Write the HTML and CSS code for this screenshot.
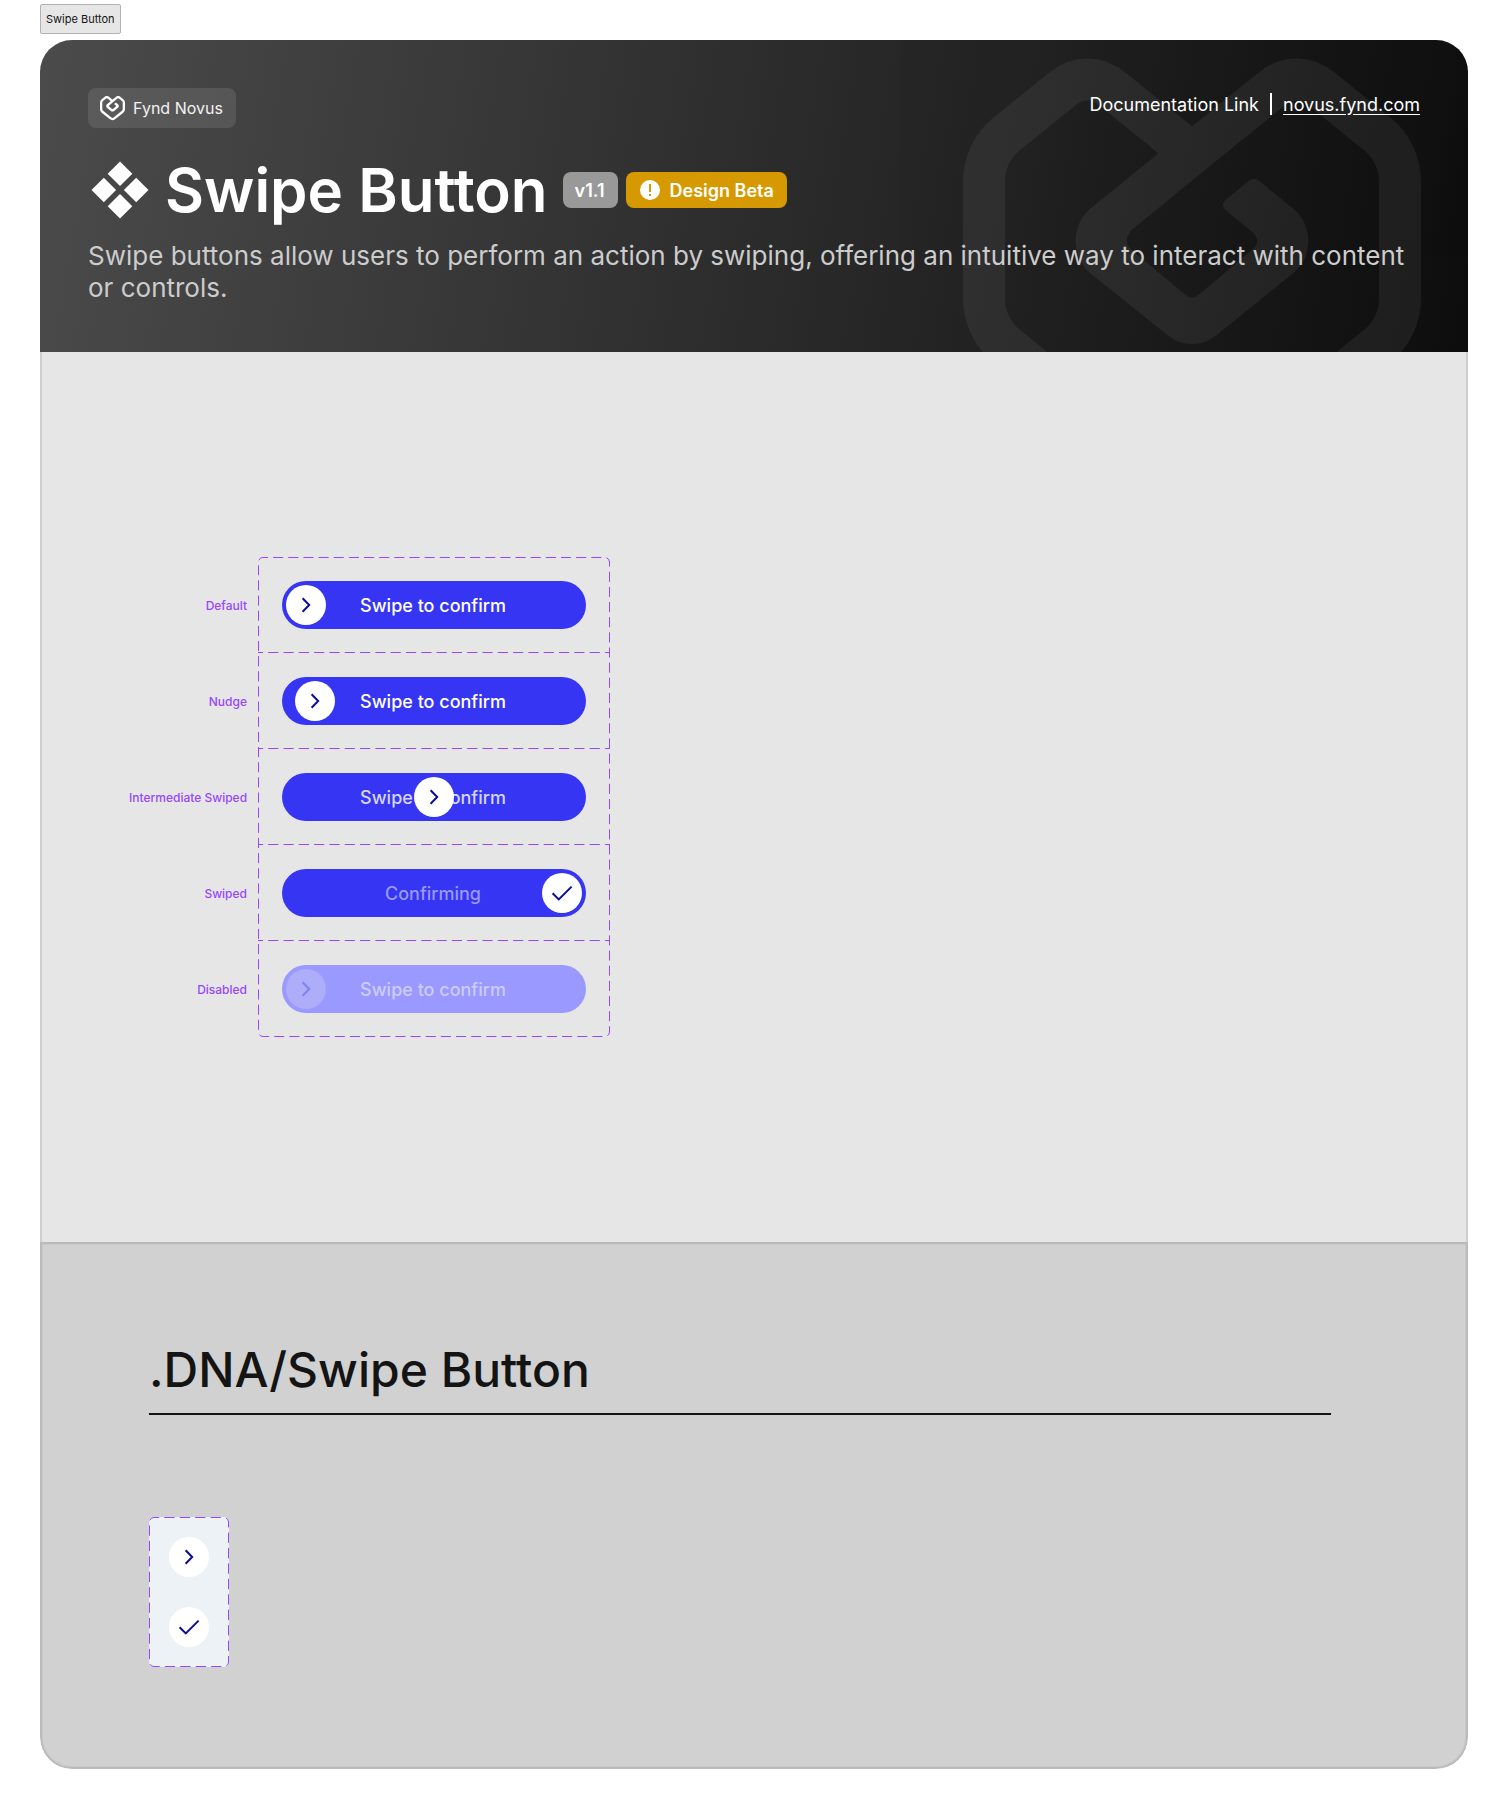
FILE: index.html
```html
<!DOCTYPE html>
<html lang="en">
<head>
<meta charset="utf-8">
<meta name="viewport" content="width=device-width, initial-scale=1">
<title>Swipe Button</title>
<link rel="stylesheet" href="styles.css">
</head>
<body>
<svg width="0" height="0" class="sprite" aria-hidden="true">
  <symbol id="logo" viewBox="0 0 458 458">
    <path fill="none" stroke="currentColor" stroke-width="42" d="M229 95.4 L150 31.500 C134.500 18.500 115.500 18 100 30.500 L44 75.600 C30 87 21 104 21 124 V240 C21 260 30 277 44 288.400 L190 407 C213 425.800 245 425.800 268 407 L414 288.400 C428 277 437 260 437 240 V124 C437 104 428 87 414 75.600 L358 30.500 C342.500 18 323.500 18.500 308 31.500 L229 95.4"/>
    <path fill="currentColor" d="M229 68.300 L127 151 C108 167 108 199 127 215 L205 277.600 C219 289 239 289 253 277.600 L331 214.500 C350 199 350 167 331 151.500 L296 122.800 Q291 118.800 286 122.800 L262.500 142 Q257.500 147 262.500 152 L289.500 174 Q299 183 289.500 191.500 L236 236.500 Q229 243 222 236.500 L168.500 192 Q159 183 168.500 172 L242.300 111.700 Z"/>
  </symbol>
  <symbol id="chevron" viewBox="0 0 24 24">
    <path fill="none" stroke="currentColor" stroke-width="2" d="M8.6 5.2 L15.2 12 L8.6 18.8"/>
  </symbol>
  <symbol id="check" viewBox="0 0 24 24">
    <path fill="none" stroke="currentColor" stroke-width="2" d="M2.6 12.2 L8.8 18.4 L21.6 5.6"/>
  </symbol>
</svg>

<div class="tag">Swipe Button</div>

<main class="sheet">
  <header class="hero">
    <svg class="watermark" aria-hidden="true"><use href="#logo"/></svg>
    <div class="topbar">
      <div class="brand"><svg aria-hidden="true"><use href="#logo"/></svg>Fynd Novus</div>
      <div class="links"><span>Documentation Link</span><span class="bar"></span><a href="#docs">novus.fynd.com</a></div>
    </div>
    <div class="heading">
      <svg class="mark" viewBox="0 0 64 64" aria-hidden="true"><path fill="currentColor" d="M32 3.500l12.300 12.300-12.300 12.300-12.300-12.300zM32 35.900l12.300 12.300-12.300 12.300-12.300-12.300zM15.800 19.700l12.300 12.300-12.300 12.300-12.300-12.300zM48.200 19.700l12.300 12.300-12.300 12.300-12.300-12.300z"/></svg>
      <h1>Swipe Button</h1>
      <div class="badges">
        <span class="badge">v1.1</span>
        <span class="badge beta"><svg viewBox="0 0 20 20" aria-hidden="true"><circle cx="10" cy="10" r="10" fill="#fff"/><path stroke="#d69900" stroke-width="2" d="M10 4v8M10 14v2"/></svg>Design Beta</span>
      </div>
    </div>
    <p>Swipe buttons allow users to perform an action by swiping, offering an intuitive way to interact with content or controls.</p>
  </header>

  <section class="states">
    <div class="grid">
      <svg class="frame" aria-hidden="true">
        <rect x="0.5" y="0.5" width="351" height="479" rx="4.500" pathLength="1635"/>
        <path d="M0 95.500H352M0 191.500H352M0 287.500H352M0 383.500H352" pathLength="1380"/>
      </svg>
      <span class="label">Default</span>
      <div class="cell"><button class="swipe"><span class="thumb"><svg><use href="#chevron"/></svg></span>Swipe to confirm</button></div>
      <span class="label">Nudge</span>
      <div class="cell"><button class="swipe nudge"><span class="thumb"><svg><use href="#chevron"/></svg></span>Swipe to confirm</button></div>
      <span class="label">Intermediate Swiped</span>
      <div class="cell"><button class="swipe midway"><span class="thumb"><svg><use href="#chevron"/></svg></span>Swipe to confirm</button></div>
      <span class="label">Swiped</span>
      <div class="cell"><button class="swipe done"><span class="thumb"><svg><use href="#check"/></svg></span>Confirming</button></div>
      <span class="label">Disabled</span>
      <div class="cell"><button class="swipe" disabled><span class="thumb"><svg><use href="#chevron"/></svg></span>Swipe to confirm</button></div>
    </div>
  </section>

  <section class="dna">
    <h2>.DNA/Swipe Button</h2>
    <div class="parts">
      <svg class="frame" aria-hidden="true"><rect x="0.5" y="0.5" width="79" height="149" rx="4.500" pathLength="435"/></svg>
      <span class="knob"><svg><use href="#chevron"/></svg></span>
      <span class="knob"><svg><use href="#check"/></svg></span>
    </div>
  </section>
</main>
</body>
</html>
```
FILE: styles.css
```css
* { box-sizing: border-box; }

body {
  margin: 0;
  padding: 4px 40px 40px;
  background: #fff;
  color: #141414;
  font-family: Inter, "Liberation Sans", sans-serif;
}

svg { display: block; flex: none; }
.sprite { position: absolute; }

.tag {
  width: max-content;
  height: 30px;
  padding: 0 5px;
  border: 1px solid #b2b2b2;
  border-radius: 2px;
  background: #e6e6e6;
  font-size: 11px;
  line-height: 28px;
}

.sheet {
  margin-top: 6px;
  border-radius: 32px;
  overflow: hidden;
}

.hero {
  position: relative;
  overflow: hidden;
  padding: 48px;
  background: linear-gradient(100deg, #4b4b4b, #0d0d0d);
  color: #fff;
}

.watermark {
  position: absolute;
  top: 18px;
  right: 47px;
  width: 458px;
  height: 458px;
  opacity: 0.06;
}

.topbar, .heading, .hero p { position: relative; }

.topbar {
  display: flex;
  justify-content: space-between;
  align-items: flex-start;
}

.brand {
  display: flex;
  align-items: center;
  gap: 8px;
  height: 40px;
  padding: 0 13px 0 12px;
  border-radius: 8px;
  background: rgba(255, 255, 255, 0.1);
  color: #f2f2f2;
  font-size: 16px;
}
.brand svg { width: 25px; height: 25px; color: #fff; }

.links {
  display: flex;
  align-items: center;
  gap: 11px;
  height: 32px;
  font-size: 18px;
}
.bar { width: 2px; height: 22px; background: #fff; }
.links a { color: inherit; text-underline-offset: 3px; }

.heading {
  display: flex;
  align-items: center;
  gap: 13px;
  height: 76px;
  margin-top: 24px;
}
.mark { width: 64px; height: 64px; }

h1 {
  margin: 0;
  font-size: 60px;
  font-weight: 600;
  line-height: 76px;
}

.badges { display: flex; gap: 8px; margin-left: 2px; }
.badge {
  display: flex;
  align-items: center;
  gap: 10px;
  height: 36px;
  padding: 0 13px 0 12px;
  border-radius: 8px;
  background: #999;
  font-size: 18px;
  font-weight: 600;
}
.beta { padding: 0 13px 0 14px; background: #d69900; }
.badge svg { width: 20px; height: 20px; }

.hero p {
  margin: 12px 0 0;
  color: #ccc;
  font-size: 26px;
  line-height: 32px;
}

.states {
  padding: 205px 0 205px 87px;
  border: solid #cfcfcf;
  border-width: 0 2px;
  background: #e6e6e6;
}

.grid {
  position: relative;
  display: grid;
  grid-template-columns: 118px 352px;
  grid-auto-rows: 96px;
  column-gap: 11px;
  align-items: center;
}

.frame {
  position: absolute;
  top: 0;
  right: 0;
  width: 100%;
  height: 100%;
  fill: none;
  stroke: #9747ff;
  stroke-dasharray: 10 5;
  stroke-dashoffset: 5;
}
.grid .frame { left: 129px; width: 352px; }

.label {
  color: #9747ff;
  font-size: 12px;
  font-weight: 500;
  text-align: right;
  white-space: nowrap;
}

.cell { padding: 0 24px; }

.swipe {
  position: relative;
  display: block;
  width: 100%;
  height: 48px;
  padding: 0 2px 0 0;
  border: 0;
  border-radius: 24px;
  background: #3535f3;
  color: #fff;
  font: 500 18px Inter, "Liberation Sans", sans-serif;
  text-align: center;
}

.thumb, .knob {
  display: grid;
  place-items: center;
  width: 40px;
  height: 40px;
  border-radius: 50%;
  background: #fff;
  color: #0c0c93;
}
.thumb { position: absolute; top: 4px; left: 4px; }
.thumb svg, .knob svg { width: 24px; height: 24px; }

.nudge .thumb { left: 13px; }
.midway { color: #d6d6fd; }
.midway .thumb { left: 132px; }
.done { color: #9999ff; }
.done .thumb { left: auto; right: 4px; }
.swipe:disabled { background: #9999ff; color: #ccccff; }
.swipe:disabled .thumb { background: #adadfa; color: #8080f8; }

.dna {
  padding: 96px 135px 100px 107px;
  border: 2px solid #bababa;
  border-radius: 0 0 32px 32px;
  background: #d1d1d1;
  box-shadow: inset 0 0 0 1px #c9c9c9;
}

h2 {
  margin: 0;
  padding-bottom: 13px;
  border-bottom: 2px solid #141414;
  font-size: 48px;
  font-weight: 500;
  line-height: 60px;
}

.parts {
  position: relative;
  display: flex;
  flex-direction: column;
  gap: 30px;
  width: 80px;
  margin-top: 102px;
  padding: 20px;
  border-radius: 5px;
  background: #ecf2f6;
}
```
